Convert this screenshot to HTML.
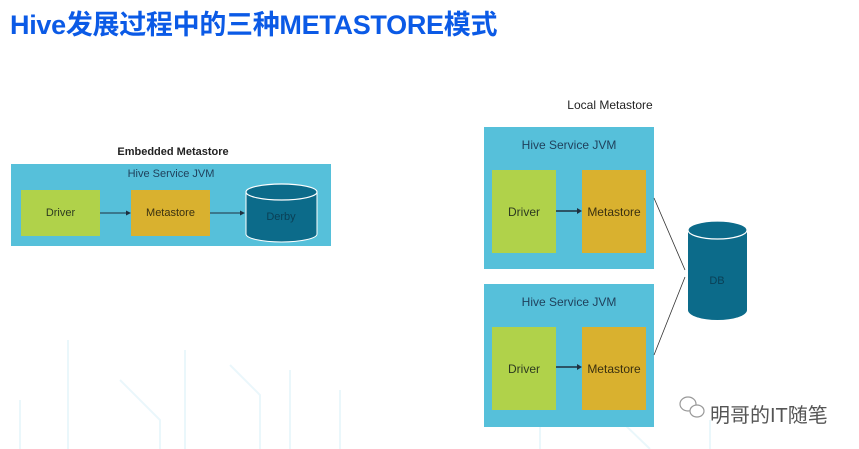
<!DOCTYPE html>
<html><head><meta charset="utf-8"><style>
body{margin:0;width:859px;height:449px;background:#fff;position:relative;overflow:hidden;font-family:"Liberation Sans","Noto Sans CJK SC",sans-serif}
.a{position:absolute}
.t{left:10px;top:3px;font-size:27px;font-weight:bold;color:#0b5ae6;white-space:nowrap;letter-spacing:-0.3px}
.panel{background:#56c0da}
.drv{background:#b0d24a;display:flex;align-items:center;justify-content:center;color:#2d3a20}
.met{background:#d9b12f;display:flex;align-items:center;justify-content:center;color:#3a3010}
.c{text-align:center;color:#1f3f5a}
</style></head><body>
<div class="a t">Hive发展过程中的三种METASTORE模式</div>

<svg class="a" style="left:0;top:340px" width="480" height="109">
<g stroke="#eaf7fb" stroke-width="2" fill="none">
<path d="M68 0V109M120 40l40 40V109M185 10V109M230 25l30 30V109M290 30V109M20 60V109M340 50V109"/>
</g></svg>
<svg class="a" style="left:480px;top:420px" width="380" height="29"><g stroke="#eaf7fb" stroke-width="2" fill="none"><path d="M60 0V29M140 0l30 29M230 0V29"/></g></svg>

<div class="a c" style="left:100px;top:146px;width:146px;font-size:11px;font-weight:bold;color:#222">Embedded Metastore</div>
<div class="a panel" style="left:11px;top:164px;width:320px;height:82px"></div>
<div class="a c" style="left:11px;top:168px;width:320px;font-size:11px">Hive Service JVM</div>
<div class="a drv" style="left:21px;top:190px;width:79px;height:46px;font-size:11px">Driver</div>
<div class="a met" style="left:131px;top:190px;width:79px;height:46px;font-size:11px">Metastore</div>
<svg class="a" style="left:0;top:0" width="859" height="449">
<g stroke="#1e3040" stroke-width="1"><path d="M100 213H128M210 213H242"/></g>
<path d="M131 213l-5-2.5v5z M245 213l-5-2.5v5z" fill="#1e3040"/>
<path d="M246 192V234A35.5 8 0 0 0 317 234V192Z" fill="#0c6b8a" stroke="#fff" stroke-width="1"/>
<ellipse cx="281.5" cy="192" rx="35.5" ry="8" fill="#0c6b8a" stroke="#fff" stroke-width="1.2"/>
<text x="281" y="220" font-size="11" text-anchor="middle" fill="#0a3f55" font-family="Liberation Sans">Derby</text>
</svg>

<div class="a c" style="left:560px;top:98px;width:100px;font-size:12px;color:#222">Local Metastore</div>
<div class="a panel" style="left:484px;top:127px;width:170px;height:142px"></div>
<div class="a panel" style="left:484px;top:284px;width:170px;height:143px"></div>
<div class="a c" style="left:484px;top:138px;width:170px;font-size:12px">Hive Service JVM</div>
<div class="a c" style="left:484px;top:295px;width:170px;font-size:12px">Hive Service JVM</div>
<div class="a drv" style="left:492px;top:170px;width:64px;height:83px;font-size:12px">Driver</div>
<div class="a met" style="left:582px;top:170px;width:64px;height:83px;font-size:12px">Metastore</div>
<div class="a drv" style="left:492px;top:327px;width:64px;height:83px;font-size:12px">Driver</div>
<div class="a met" style="left:582px;top:327px;width:64px;height:83px;font-size:12px">Metastore</div>
<svg class="a" style="left:0;top:0" width="859" height="449">
<g stroke="#1e3040" stroke-width="1.5"><path d="M556 211H578M556 367H578"/></g>
<path d="M582 211l-5-3v6z M582 367l-5-3v6z" fill="#1e3040"/>
<g stroke="#333" stroke-width="0.8"><path d="M654 198L685 270M654 355L685 277"/></g>
<path d="M688 230V310A29.5 10 0 0 0 747 310V230Z" fill="#0c6b8a"/>
<ellipse cx="717.5" cy="230" rx="29.5" ry="9" fill="#0c6b8a" stroke="#fff" stroke-width="1.2"/>
<text x="717" y="284" font-size="11" text-anchor="middle" fill="#0a3f55" font-family="Liberation Sans">DB</text>
<g fill="none" stroke="#999" stroke-width="1.2"><ellipse cx="688" cy="404" rx="8" ry="7"/><ellipse cx="697" cy="411" rx="7" ry="6" fill="#fff"/></g>
</svg>
<div class="a" style="left:710px;top:399px;font-size:20px;color:#555;white-space:nowrap">明哥的IT随笔</div>
</body></html>
